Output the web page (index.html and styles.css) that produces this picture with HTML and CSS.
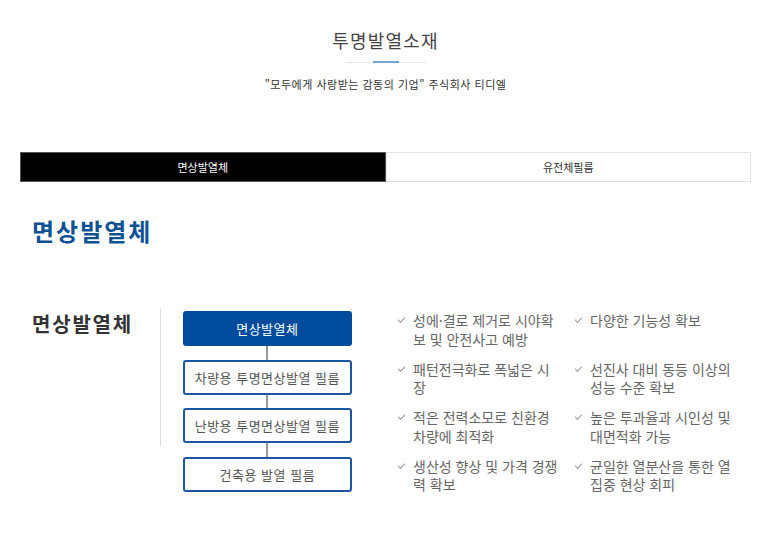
FILE: index.html
```html
<!DOCTYPE html>
<html lang="ko">
<head>
    <meta charset="UTF-8">
    <meta name="viewport" content="width=device-width, initial-scale=1.0">
    <title>투명발열소재</title>
    <link rel="stylesheet" href="styles.css">
</head>
<body>
    <div class="page">
        <div class="page-title">
            <h2>투명발열소재</h2>
            <div class="divider"></div>
            <p>"모두에게 사랑받는 감동의 기업" 주식회사 티디엘</p>
        </div>

        <div class="tabs">
            <div class="tab active">면상발열체</div>
            <div class="tab">유전체필름</div>
        </div>

        <h3 class="section-title">면상발열체</h3>

        <div class="product">
            <div class="product-name">면상발열체</div>

            <div class="product-tree">
                <div class="tree-box main">면상발열체</div>
                <div class="tree-box">차량용 투명면상발열 필름</div>
                <div class="tree-box">난방용 투명면상발열 필름</div>
                <div class="tree-box">건축용 발열 필름</div>
            </div>

            <ul class="features">
                <li>성에·결로 제거로 시야확보 및 안전사고 예방</li>
                <li>다양한 기능성 확보</li>
                <li>패턴전극화로 폭넓은 시장</li>
                <li>선진사 대비 동등 이상의 성능 수준 확보</li>
                <li>적은 전력소모로 친환경 차량에 최적화</li>
                <li>높은 투과율과 시인성 및 대면적화 가능</li>
                <li>생산성 향상 및 가격 경쟁력 확보</li>
                <li>균일한 열분산을 통한 열 집중 현상 회피</li>
            </ul>
        </div>
    </div>
</body>
</html>
```

FILE: styles.css
```css
body {
    margin: 0;
    background-color: #fff;
    font-family: "Noto Sans CJK KR", "Noto Sans", sans-serif;
    color: #333;
}

.page {
    width: 731px;
    margin: 0 0 0 20px;
}

/* title */
.page-title {
    text-align: center;
}

.page-title h2 {
    margin: 29px 0 0;
    font-size: 18px;
    line-height: 22px;
    font-weight: normal;
    letter-spacing: 1.2px;
    color: #444;
}

.divider {
    position: relative;
    width: 80px;
    height: 1px;
    margin: 11px auto 0;
    background-color: #e6e6e6;
}

.divider::after {
    content: "";
    position: absolute;
    left: 27px;
    top: -1px;
    width: 26px;
    height: 2px;
    background-color: #6fa7cc;
}

.page-title p {
    margin: 13px 0 0;
    font-size: 11px;
    line-height: 16px;
    letter-spacing: 0.5px;
    color: #333;
}

/* tabs */
.tabs {
    display: flex;
    margin-top: 60px;
}

.tab {
    flex: 1;
    height: 30px;
    box-sizing: border-box;
    border: 1px solid #e2e2e2;
    font-size: 11px;
    line-height: 28px;
    text-align: center;
    color: #333;
    background-color: #fff;
}

.tab.active {
    background-color: #000;
    border-color: #555;
    color: #fff;
}

.section-title {
    margin: 34px 0 0 12px;
    font-size: 24px;
    line-height: 30px;
    font-weight: bold;
    letter-spacing: 2px;
    color: #0f5294;
}

/* product block */
.product {
    display: flex;
    align-items: flex-start;
    margin-top: 63px;
    padding-left: 12px;
}

.product-name {
    width: 130px;
    height: 137px;
    box-sizing: border-box;
    padding-top: 2px;
    border-right: 1px solid #ddd;
    font-size: 20px;
    line-height: 26px;
    font-weight: bold;
    letter-spacing: 1.8px;
    color: #333;
}

.product-tree {
    display: flex;
    flex-direction: column;
    gap: 13.5px;
    width: 171px;
    margin: 2px 0 0 22px;
}

.tree-box {
    position: relative;
    height: 35px;
    box-sizing: border-box;
    border: 2px solid #1d55a0;
    border-radius: 3px;
    font-size: 13px;
    line-height: 31px;
    letter-spacing: 0.5px;
    text-align: center;
    color: #555;
    background-color: #fff;
}

.tree-box::before {
    content: "";
    position: absolute;
    left: 50%;
    top: -15.5px;
    width: 2px;
    height: 13.5px;
    margin-left: -1px;
    background-color: #999;
}

.tree-box.main {
    background-color: #004c9c;
    border-color: #004c9c;
    color: #fff;
}

.tree-box.main::before {
    display: none;
}

.features {
    display: grid;
    grid-template-columns: 177px 177px;
    row-gap: 11.5px;
    margin: 2px 0 0 45px;
    padding: 0;
    list-style: none;
}

.features li {
    position: relative;
    padding: 0 12px 0 16px;
    font-size: 14px;
    line-height: 18.5px;
    color: #666;
}

.features li::before {
    content: "";
    position: absolute;
    left: 1px;
    top: 6px;
    width: 6px;
    height: 3px;
    border-left: 1.2px solid #999;
    border-bottom: 1.2px solid #999;
    transform: rotate(-45deg);
}
```
